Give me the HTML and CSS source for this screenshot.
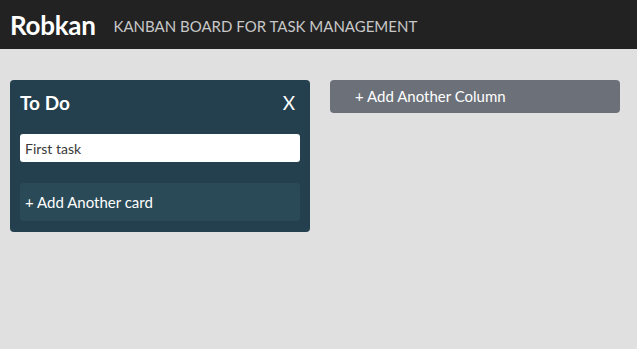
FILE: index.html
```html
<!DOCTYPE html>
<html>
<head>
    <meta charset="utf-8" />
    <title>Robkan</title>
    <link rel="stylesheet" href="styles.css">
</head>
<body>
    <header class="topbar">
        <h1 class="brand">Robkan</h1>
        <span class="tagline">Kanban board for task management</span>
    </header>

    <main class="board">
        <div class="column">
            <div class="column-head">
                <h2 class="column-title">To Do</h2>
                <button class="column-close">X</button>
            </div>
            <input type="text" class="task-input" value="First task">
            <button class="add-card">+ Add Another card</button>
        </div>

        <button class="add-column">+ Add Another Column</button>
    </main>
</body>
</html>
```

FILE: styles.css
```css
* {
    padding: 0;
    margin: 0;
    box-sizing: border-box;
}

body {
    background: #e0e0e0;
    font-family: "Lato", "Noto Sans", sans-serif;
    min-height: 349px;
}

.topbar {
    height: 49px;
    background: #222222;
    display: flex;
    align-items: center;
    padding: 0 10px;
}

.brand {
    font-size: 26px;
    font-weight: 700;
    color: #ffffff;
    letter-spacing: -0.3px;
}

.tagline {
    margin-left: 18px;
    margin-top: 3px;
    font-size: 15px;
    text-transform: uppercase;
    color: #c8c8c8;
}

.board {
    display: flex;
    align-items: flex-start;
    gap: 20px;
    padding: 31px 10px;
}

.column {
    width: 300px;
    background: #243f4e;
    border-radius: 4px;
    padding: 10px 10px 11px;
}

.column-head {
    display: flex;
    justify-content: space-between;
    align-items: center;
    height: 24px;
    margin-bottom: 20px;
}

.column-title {
    font-size: 19px;
    font-weight: 700;
    color: #ffffff;
}

.column-close {
    background: none;
    border: none;
    color: #ffffff;
    font-family: inherit;
    font-size: 19px;
    margin-right: 5px;
}

.task-input {
    display: block;
    width: 100%;
    height: 28px;
    border: none;
    border-radius: 3px;
    padding: 0 5px;
    font-family: inherit;
    font-size: 14px;
    color: #3a3a3a;
    background: #ffffff;
}

.add-card {
    display: block;
    width: 100%;
    height: 38px;
    margin-top: 21px;
    border: none;
    border-radius: 3px;
    background: #2a4a58;
    color: #ffffff;
    text-align: left;
    padding: 0 5px;
    font-family: inherit;
    font-size: 15px;
}

.add-column {
    width: 290px;
    height: 33px;
    border: none;
    border-radius: 4px;
    background: #6b7079;
    color: #ffffff;
    text-align: left;
    padding: 0 25px 2px;
    font-family: inherit;
    font-size: 15px;
}
```
